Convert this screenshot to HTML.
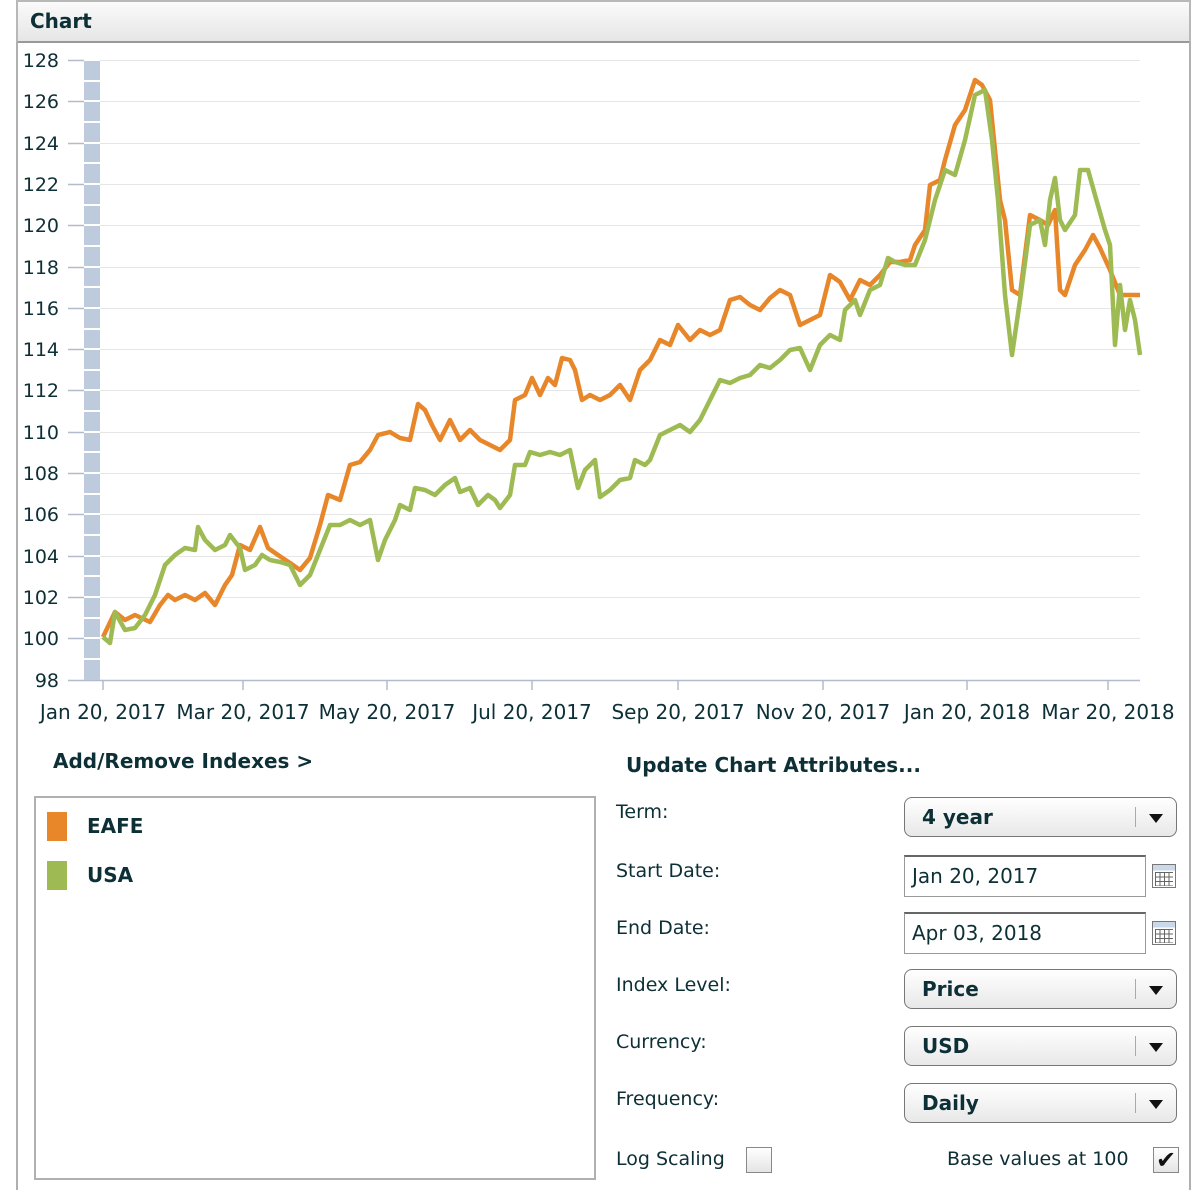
<!DOCTYPE html>
<html><head><meta charset="utf-8"><style>
*{margin:0;padding:0;box-sizing:border-box}
body{width:1200px;height:1190px;background:#fff;font-family:"DejaVu Sans","Liberation Sans",sans-serif;color:#0d2f36;position:relative;overflow:hidden}
.a{position:absolute}
.hdr{left:16px;top:0;width:1175px;height:43px;border:2px solid #b8b8b8;border-bottom:2px solid #999;background:linear-gradient(#fafafa,#e6e6e6)}
.lbl{font-size:19px;color:#0d2f36}
.sel{left:904px;width:273px;height:40px;border:1.5px solid #777;border-radius:8px;background:linear-gradient(#fff,#e8e8e8);font-weight:bold;font-size:20px;padding:7px 0 0 17px}
.sel:after{content:"";position:absolute;right:40px;top:9px;height:20px;border-left:1px solid #aaa}
.sel i{position:absolute;right:13px;top:16px;border-left:7px solid transparent;border-right:7px solid transparent;border-top:9px solid #111}
.inp{left:904px;width:242px;height:42px;border:1px solid #999;border-top:2px solid #666;font-size:20px;padding:7px 0 0 7px}
.cal{left:1152px;width:24px;height:24px;border:1px solid #777;background:linear-gradient(#c9d9ea 0 25%,#fff 25%);}
.cal:before{content:"";position:absolute;left:2px;top:7px;width:18px;height:14px;background:repeating-linear-gradient(90deg,#666 0 1px,transparent 1px 4.5px),repeating-linear-gradient(#666 0 1px,transparent 1px 4.5px)}
.cb{width:26px;height:26px;border:1px solid #888;background:linear-gradient(#fff,#e4e4e4)}
</style></head><body>
<div class="a hdr"><span class="a" style="left:12px;top:7px;font-weight:bold;font-size:20px">Chart</span></div>
<div class="a" style="left:16px;top:42px;width:2px;height:1148px;background:#b0b0b0"></div>
<div class="a" style="left:1189px;top:42px;width:2px;height:1148px;background:#b0b0b0"></div>
<svg class="a" style="left:0;top:0" width="1200" height="740" font-family="DejaVu Sans, Liberation Sans, sans-serif" font-size="19" fill="#0d2f36">
<g stroke="#e6e6e6" stroke-width="1">
<line x1="100" y1="60.5" x2="1140" y2="60.5"/><line x1="100" y1="101.5" x2="1140" y2="101.5"/><line x1="100" y1="143.5" x2="1140" y2="143.5"/><line x1="100" y1="184.5" x2="1140" y2="184.5"/><line x1="100" y1="225.5" x2="1140" y2="225.5"/><line x1="100" y1="267.5" x2="1140" y2="267.5"/><line x1="100" y1="308.5" x2="1140" y2="308.5"/><line x1="100" y1="349.5" x2="1140" y2="349.5"/><line x1="100" y1="390.5" x2="1140" y2="390.5"/><line x1="100" y1="432.5" x2="1140" y2="432.5"/><line x1="100" y1="473.5" x2="1140" y2="473.5"/><line x1="100" y1="514.5" x2="1140" y2="514.5"/><line x1="100" y1="556.5" x2="1140" y2="556.5"/><line x1="100" y1="597.5" x2="1140" y2="597.5"/><line x1="100" y1="638.5" x2="1140" y2="638.5"/>
</g>
<g stroke="#b0bccb" stroke-width="1.5">
<line x1="68" y1="60.5" x2="84" y2="60.5"/><line x1="68" y1="101.5" x2="84" y2="101.5"/><line x1="68" y1="143.5" x2="84" y2="143.5"/><line x1="68" y1="184.5" x2="84" y2="184.5"/><line x1="68" y1="225.5" x2="84" y2="225.5"/><line x1="68" y1="267.5" x2="84" y2="267.5"/><line x1="68" y1="308.5" x2="84" y2="308.5"/><line x1="68" y1="349.5" x2="84" y2="349.5"/><line x1="68" y1="390.5" x2="84" y2="390.5"/><line x1="68" y1="432.5" x2="84" y2="432.5"/><line x1="68" y1="473.5" x2="84" y2="473.5"/><line x1="68" y1="514.5" x2="84" y2="514.5"/><line x1="68" y1="556.5" x2="84" y2="556.5"/><line x1="68" y1="597.5" x2="84" y2="597.5"/><line x1="68" y1="638.5" x2="84" y2="638.5"/><line x1="68" y1="680.5" x2="1140" y2="680.5"/>
<line x1="103" y1="681" x2="103" y2="690"/><line x1="243" y1="681" x2="243" y2="690"/><line x1="387" y1="681" x2="387" y2="690"/><line x1="532" y1="681" x2="532" y2="690"/><line x1="678" y1="681" x2="678" y2="690"/><line x1="823" y1="681" x2="823" y2="690"/><line x1="967" y1="681" x2="967" y2="690"/><line x1="1108" y1="681" x2="1108" y2="690"/>
</g>
<rect x="84" y="61" width="16" height="619" fill="#bdcbdc"/>
<g stroke="#fff" stroke-width="2"><line x1="84" y1="81" x2="100" y2="81"/><line x1="84" y1="101" x2="100" y2="101"/><line x1="84" y1="122" x2="100" y2="122"/><line x1="84" y1="143" x2="100" y2="143"/><line x1="84" y1="163" x2="100" y2="163"/><line x1="84" y1="184" x2="100" y2="184"/><line x1="84" y1="205" x2="100" y2="205"/><line x1="84" y1="225" x2="100" y2="225"/><line x1="84" y1="246" x2="100" y2="246"/><line x1="84" y1="267" x2="100" y2="267"/><line x1="84" y1="287" x2="100" y2="287"/><line x1="84" y1="308" x2="100" y2="308"/><line x1="84" y1="329" x2="100" y2="329"/><line x1="84" y1="349" x2="100" y2="349"/><line x1="84" y1="370" x2="100" y2="370"/><line x1="84" y1="390" x2="100" y2="390"/><line x1="84" y1="411" x2="100" y2="411"/><line x1="84" y1="432" x2="100" y2="432"/><line x1="84" y1="452" x2="100" y2="452"/><line x1="84" y1="473" x2="100" y2="473"/><line x1="84" y1="494" x2="100" y2="494"/><line x1="84" y1="514" x2="100" y2="514"/><line x1="84" y1="535" x2="100" y2="535"/><line x1="84" y1="556" x2="100" y2="556"/><line x1="84" y1="576" x2="100" y2="576"/><line x1="84" y1="597" x2="100" y2="597"/><line x1="84" y1="618" x2="100" y2="618"/><line x1="84" y1="638" x2="100" y2="638"/><line x1="84" y1="659" x2="100" y2="659"/></g>
<g text-anchor="end"><text x="59" y="67">128</text><text x="59" y="108">126</text><text x="59" y="150">124</text><text x="59" y="191">122</text><text x="59" y="232">120</text><text x="59" y="274">118</text><text x="59" y="315">116</text><text x="59" y="356">114</text><text x="59" y="397">112</text><text x="59" y="439">110</text><text x="59" y="480">108</text><text x="59" y="521">106</text><text x="59" y="563">104</text><text x="59" y="604">102</text><text x="59" y="645">100</text><text x="59" y="687">98</text></g>
<g text-anchor="middle" font-size="20"><text x="103" y="719">Jan 20, 2017</text><text x="243" y="719">Mar 20, 2017</text><text x="387" y="719">May 20, 2017</text><text x="532" y="719">Jul 20, 2017</text><text x="678" y="719">Sep 20, 2017</text><text x="823" y="719">Nov 20, 2017</text><text x="967" y="719">Jan 20, 2018</text><text x="1108" y="719">Mar 20, 2018</text></g>
<polyline fill="none" stroke="#e8862a" stroke-width="4.5" stroke-linejoin="round" points="103,637 115,612 125,620 135,615 150,622 160,605 168,595 175,600 185,595 195,600 205,593 215,605 225,585 232,575 240,545 250,550 260,527 268,548 278,555 290,563 300,570 310,558 320,525 328,495 340,500 350,465 360,462 370,450 378,435 390,432 400,438 410,440 418,404 425,410 432,425 440,440 450,420 460,440 470,430 480,440 490,445 500,450 510,440 515,400 525,395 532,378 540,395 548,378 555,385 562,358 570,360 575,370 582,400 590,395 600,400 610,395 620,385 630,400 640,370 650,360 660,340 670,345 678,325 690,340 700,330 710,335 720,330 730,300 740,297 750,305 760,310 770,298 780,290 790,295 800,325 810,320 820,315 830,275 840,282 850,300 860,280 870,285 880,275 890,262 900,262 910,260 915,245 925,230 930,185 940,180 945,160 955,125 965,110 975,80 982,85 990,100 995,150 1000,200 1005,220 1012,290 1020,295 1030,215 1040,220 1048,225 1055,210 1060,290 1065,295 1075,265 1085,250 1093,235 1100,248 1110,270 1120,295 1140,295"/>
<polyline fill="none" stroke="#9dbb52" stroke-width="4.5" stroke-linejoin="round" points="103,637 110,643 115,612 125,630 135,628 145,615 155,595 165,565 175,555 185,548 195,550 198,527 205,540 215,550 225,545 230,535 240,548 245,570 255,565 262,555 270,560 280,562 290,565 300,585 310,575 320,550 330,525 340,525 350,520 360,525 370,520 378,560 385,540 395,520 400,505 410,510 415,488 425,490 435,495 445,485 455,478 460,492 470,488 478,505 488,495 495,500 500,508 510,495 515,465 525,465 530,452 540,455 550,452 560,455 570,450 578,488 585,470 595,460 600,497 610,490 620,480 630,478 635,460 645,465 650,460 660,435 670,430 680,425 690,432 700,420 710,400 720,380 730,383 740,378 750,375 760,365 770,368 780,360 790,350 800,348 810,370 820,345 830,335 840,340 845,310 855,300 860,315 870,290 880,285 888,258 895,262 905,265 915,265 925,240 935,200 945,170 955,175 965,140 975,95 985,90 992,140 998,200 1005,295 1012,355 1020,300 1030,225 1040,220 1045,245 1050,200 1055,178 1060,220 1065,230 1075,215 1080,170 1088,170 1095,195 1105,230 1110,245 1115,345 1120,285 1125,330 1130,300 1135,320 1140,355"/>
</svg>
<div class="a" style="left:53px;top:749px;font-weight:bold;font-size:20px">Add/Remove Indexes &gt;</div>
<div class="a" style="left:34px;top:796px;width:562px;height:384px;border:2px solid #b0b0b0"></div>
<div class="a" style="left:47px;top:812px;width:20px;height:29px;background:#e8862a"></div>
<div class="a" style="left:87px;top:814px;font-weight:bold;font-size:20px">EAFE</div>
<div class="a" style="left:47px;top:861px;width:20px;height:29px;background:#9dbb52"></div>
<div class="a" style="left:87px;top:863px;font-weight:bold;font-size:20px">USA</div>
<div class="a" style="left:626px;top:753px;font-weight:bold;font-size:20px">Update Chart Attributes...</div>
<div class="a lbl" style="left:616px;top:801px">Term:</div>
<div class="a lbl" style="left:616px;top:860px">Start Date:</div>
<div class="a lbl" style="left:616px;top:917px">End Date:</div>
<div class="a lbl" style="left:616px;top:974px">Index Level:</div>
<div class="a lbl" style="left:616px;top:1031px">Currency:</div>
<div class="a lbl" style="left:616px;top:1088px">Frequency:</div>
<div class="a lbl" style="left:616px;top:1148px">Log Scaling</div>
<div class="a sel" style="top:797px">4 year<i></i></div>
<div class="a inp" style="top:855px">Jan 20, 2017</div>
<div class="a cal" style="top:864px"></div>
<div class="a inp" style="top:912px">Apr 03, 2018</div>
<div class="a cal" style="top:921px"></div>
<div class="a sel" style="top:969px">Price<i></i></div>
<div class="a sel" style="top:1026px">USD<i></i></div>
<div class="a sel" style="top:1083px">Daily<i></i></div>
<div class="a cb" style="left:746px;top:1147px"></div>
<div class="a lbl" style="left:947px;top:1148px">Base values at 100</div>
<div class="a cb" style="left:1153px;top:1147px;font-size:24px;line-height:24px;text-align:center;color:#111">✔</div>
</body></html>
